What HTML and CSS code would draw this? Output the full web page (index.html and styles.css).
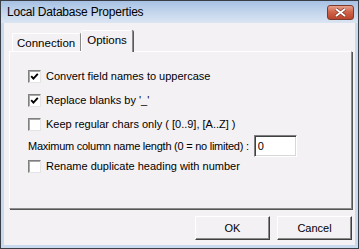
FILE: index.html
```html
<!DOCTYPE html>
<html lang="en">
<head>
  <meta charset="UTF-8" />
  <title>Local Database Properties</title>
  <link rel="stylesheet" href="styles.css">
</head>
<body>

  <div class="window">
    <div class="titlebar">
      <span class="title">Local Database Properties</span>
      <span class="close">
        <svg width="13" height="9" viewBox="0 0 13 9">
          <path d="M2 1 L11 8 M11 1 L2 8" stroke="#7a3326" stroke-width="3.2" fill="none"/>
          <path d="M2 1 L11 8 M11 1 L2 8" stroke="#ffffff" stroke-width="1.8" fill="none"/>
        </svg>
      </span>
    </div>

    <div class="frame">
      <div class="client">
        <div class="tabs">
          <div class="tab">Connection</div>
          <div class="tab active">Options</div>
        </div>

        <div class="panel">
          <label class="row">
            <span class="check on"><svg width="9" height="9" viewBox="0 0 9 9"><path d="M1.2 4.2 L3.4 6.6 L7.8 1.8" stroke="#000" stroke-width="1.9" fill="none"/></svg></span>
            Convert field names to uppercase
          </label>
          <label class="row">
            <span class="check on"><svg width="9" height="9" viewBox="0 0 9 9"><path d="M1.2 4.2 L3.4 6.6 L7.8 1.8" stroke="#000" stroke-width="1.9" fill="none"/></svg></span>
            Replace blanks by '_'
          </label>
          <label class="row">
            <span class="check"></span>
            Keep regular chars only ( [0..9], [A..Z] )
          </label>
          <div class="row short">
            <span class="tight">Maximum column name length (0 = no limited) :</span>
            <input class="num" type="text" value="0" />
          </div>
          <label class="row short">
            <span class="check"></span>
            Rename duplicate heading with number
          </label>
        </div>

        <div class="buttons">
          <button>OK</button>
          <button>Cancel</button>
        </div>
      </div>
    </div>
  </div>

</body>
</html>
```

FILE: styles.css
```css
* {
  box-sizing: border-box;
  font-family: 'Liberation Sans', Arial, sans-serif;
}
body {
  margin: 0;
  background: #ffffff;
}
.window {
  width: 359px;
  height: 249px;
  border: 1px solid #3a3f47;
  display: flex;
  flex-direction: column;
  background: #c9d9ee;
}
.titlebar {
  height: 22px;
  display: flex;
  align-items: center;
  justify-content: space-between;
  padding: 0 4px 0 6px;
  background: linear-gradient(#a6c1e4, #c3d5ec 50%, #dbe5f3);
}
.title {
  font-size: 12px;
  color: #000;
  letter-spacing: -0.2px;
}
.close {
  width: 27px;
  height: 15px;
  margin-top: 1px;
  display: flex;
  align-items: center;
  justify-content: center;
  border: 1px solid #7b3a2c;
  border-radius: 3px;
  background: linear-gradient(#e8a08c, #d0644a 45%, #b8442c);
}
.frame {
  flex: 1;
  padding: 0 3px 3px;
  display: flex;
}
.client {
  flex: 1;
  background: #f4f1f4;
  display: flex;
  flex-direction: column;
  padding: 7px 3px 0 5px;
  font-size: 11px;
  color: #000;
}
.tabs {
  display: flex;
  align-items: flex-end;
  height: 21px;
  padding-left: 3px;
}
.tab {
  height: 18px;
  padding: 3px 5px 0 4px;
  border: 1px solid #ffffff;
  border-bottom: none;
  border-right: 1px solid #8a8a8a;
  border-radius: 2px 2px 0 0;
  box-shadow: 1px 0 0 #5a5a5a;
  font-size: 11.5px;
  line-height: 13px;
}
.tab.active {
  height: 22px;
  margin-bottom: -1px;
  padding: 3px 5px 0 5px;
  background: #f4f1f4;
  position: relative;
  z-index: 1;
}
.panel {
  height: 158px;
  border: 1px solid;
  border-color: #ffffff #8c8c8c #8c8c8c #ffffff;
  box-shadow: 1px 1px 0 #555;
  padding: 12px 0 0 18px;
  display: flex;
  flex-direction: column;
}
.row {
  height: 24px;
  display: flex;
  align-items: center;
  font-size: 11px;
}
.row.short {
  height: 20px;
}
.tight {
  letter-spacing: -0.25px;
}
.check {
  width: 13px;
  height: 13px;
  margin-right: 5px;
  display: flex;
  align-items: center;
  justify-content: center;
  background: #ffffff;
  border: 1px solid;
  border-color: #7f7f7f #e4e4e4 #e4e4e4 #7f7f7f;
  box-shadow: inset 1px 1px 0 #a8a8a8;
}
.num {
  width: 43px;
  height: 22px;
  margin-left: 5px;
  padding: 0 3px;
  font-size: 11px;
  border: 1px solid;
  border-color: #808080 #ffffff #ffffff #808080;
  box-shadow: inset 1px 1px 0 #404040, inset -1px -1px 0 #d8d8d8;
  background: #ffffff;
  outline: none;
}
.buttons {
  display: flex;
  justify-content: flex-end;
  gap: 7px;
  margin-top: 7px;
}
button {
  width: 75px;
  height: 24px;
  font-size: 11px;
  color: #000;
  background: #f4f1f4;
  border: 1px solid;
  border-color: #ffffff #404040 #404040 #ffffff;
  box-shadow: inset -1px -1px 0 #8a8a8a;
  padding: 0;
}
```
